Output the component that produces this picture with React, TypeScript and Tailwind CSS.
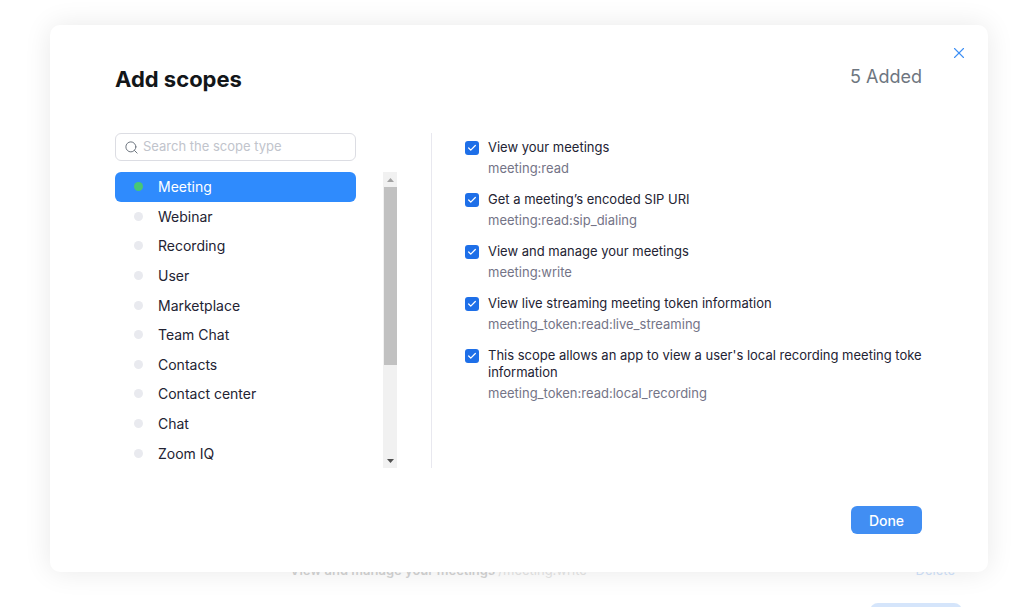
import React from 'react';
import { Search, X, Check } from 'lucide-react';

const categories = [
  'Meeting',
  'Webinar',
  'Recording',
  'User',
  'Marketplace',
  'Team Chat',
  'Contacts',
  'Contact center',
  'Chat',
  'Zoom IQ',
];

const scopes = [
  { title: 'View your meetings', id: 'meeting:read' },
  { title: 'Get a meeting’s encoded SIP URI', id: 'meeting:read:sip_dialing' },
  { title: 'View and manage your meetings', id: 'meeting:write' },
  { title: 'View live streaming meeting token information', id: 'meeting_token:read:live_streaming' },
  {
    title: "This scope allows an app to view a user's local recording meeting toke information",
    id: 'meeting_token:read:local_recording',
  },
];

const ScopeItem = ({ title, id }: { title: string; id: string }) => (
  <div className="flex gap-[9px]">
    <div className="mt-[2px] w-[14px] h-[14px] shrink-0 rounded-[3px] bg-[#1e6fe8] flex items-center justify-center">
      <Check size={10} strokeWidth={3} className="text-white" />
    </div>
    <div className="flex flex-col gap-[3px]">
      <p className="text-[13px] leading-[17px] text-[#232333]">{title}</p>
      <p className="text-[13px] leading-[18px] text-[#747487]">{id}</p>
    </div>
  </div>
);

export default function App() {
  return (
    <div
      className="relative w-[1024px] h-[607px] overflow-hidden bg-white"
      style={{ fontFamily: 'Inter, "Noto Sans", sans-serif' }}
    >
      {/* page behind the modal */}
      <div className="pt-[562px] pl-[290px] pr-[69px] opacity-25">
        <div className="flex items-center justify-between h-[18px]">
          <p className="text-[13px] font-semibold text-[#555]">
            View and manage your meetings <span className="font-normal text-[#999]">/meeting:write</span>
          </p>
          <span className="text-[13px] text-[#4a8ff0]">Delete</span>
        </div>
        <div className="flex justify-end mt-[23px]">
          <div className="w-[92px] h-[30px] rounded-[8px] bg-[#5d9cf2] -mr-[7px]"></div>
        </div>
      </div>

      {/* modal */}
      <div className="absolute left-[50px] top-[25px] w-[938px] h-[547px] rounded-[10px] bg-white shadow-[0_0_28px_rgba(0,0,0,0.09)] pl-[65px] pr-[66px] pt-[38px]">
        <button className="absolute right-[20px] top-[19px]">
          <X size={18} strokeWidth={1.5} className="text-[#3d8ff5]" />
        </button>

        <div className="flex items-center justify-between">
          <h1 className="text-[22px] leading-[28px] font-bold text-[#131619]">Add scopes</h1>
          <span className="text-[18px] leading-[28px] text-[#6e7680] mb-[4px]">5 Added</span>
        </div>

        <div className="flex mt-[38px] h-[335px]">
          {/* left column */}
          <div className="w-[282px] flex flex-col">
            <div className="w-[241px] h-[28px] rounded-[6px] border border-[#dcdde3] flex items-center pl-[8px] gap-[4px]">
              <Search size={15} strokeWidth={1.6} className="text-[#6e7680]" />
              <span className="text-[13px] text-[#c1c4cc]">Search the scope type</span>
            </div>
            <div className="flex mt-[11px] gap-[27px]">
              <div className="w-[241px] flex flex-col">
                {categories.map((c, i) => (
                  <div
                    key={c}
                    className={
                      i === 0
                        ? 'h-[29.6px] flex items-center pl-[19px] gap-[15px] rounded-[6px] bg-[#2f8bfd]'
                        : 'h-[29.6px] flex items-center pl-[19px] gap-[15px]'
                    }
                  >
                    <span
                      className={
                        i === 0
                          ? 'w-[9px] h-[9px] rounded-full bg-[#48c774]'
                          : 'w-[9px] h-[9px] rounded-full bg-[#e9eaef]'
                      }
                    ></span>
                    <span className={i === 0 ? 'text-[14px] text-white' : 'text-[14px] text-[#232333]'}>{c}</span>
                  </div>
                ))}
              </div>
              <div className="w-[14px] h-[296px] bg-[#f1f1f1] flex flex-col items-center">
                <div className="h-[15px] flex items-center justify-center">
                  <svg width="7" height="4" viewBox="0 0 7 4">
                    <path d="M3.5 0 L7 4 L0 4 Z" fill="#a3a3a3" />
                  </svg>
                </div>
                <div className="w-[13px] h-[178px] bg-[#c1c1c1]"></div>
                <div className="flex-1"></div>
                <div className="h-[15px] flex items-center justify-center">
                  <svg width="7" height="4" viewBox="0 0 7 4">
                    <path d="M0 0 L7 0 L3.5 4 Z" fill="#505050" />
                  </svg>
                </div>
              </div>
            </div>
          </div>

          {/* divider */}
          <div className="ml-[34px] w-px bg-[#e8e8ef]"></div>

          {/* right column */}
          <div className="ml-[33px] flex-1 flex flex-col gap-[14px] pt-[6px]">
            {scopes.map((s) => (
              <ScopeItem key={s.id} {...s} />
            ))}
          </div>
        </div>

        <div className="flex justify-end mt-[38px]">
          <button className="w-[71px] h-[28px] rounded-[6px] bg-[#418ef3] text-white text-[14px] font-medium">
            Done
          </button>
        </div>
      </div>
    </div>
  );
}
